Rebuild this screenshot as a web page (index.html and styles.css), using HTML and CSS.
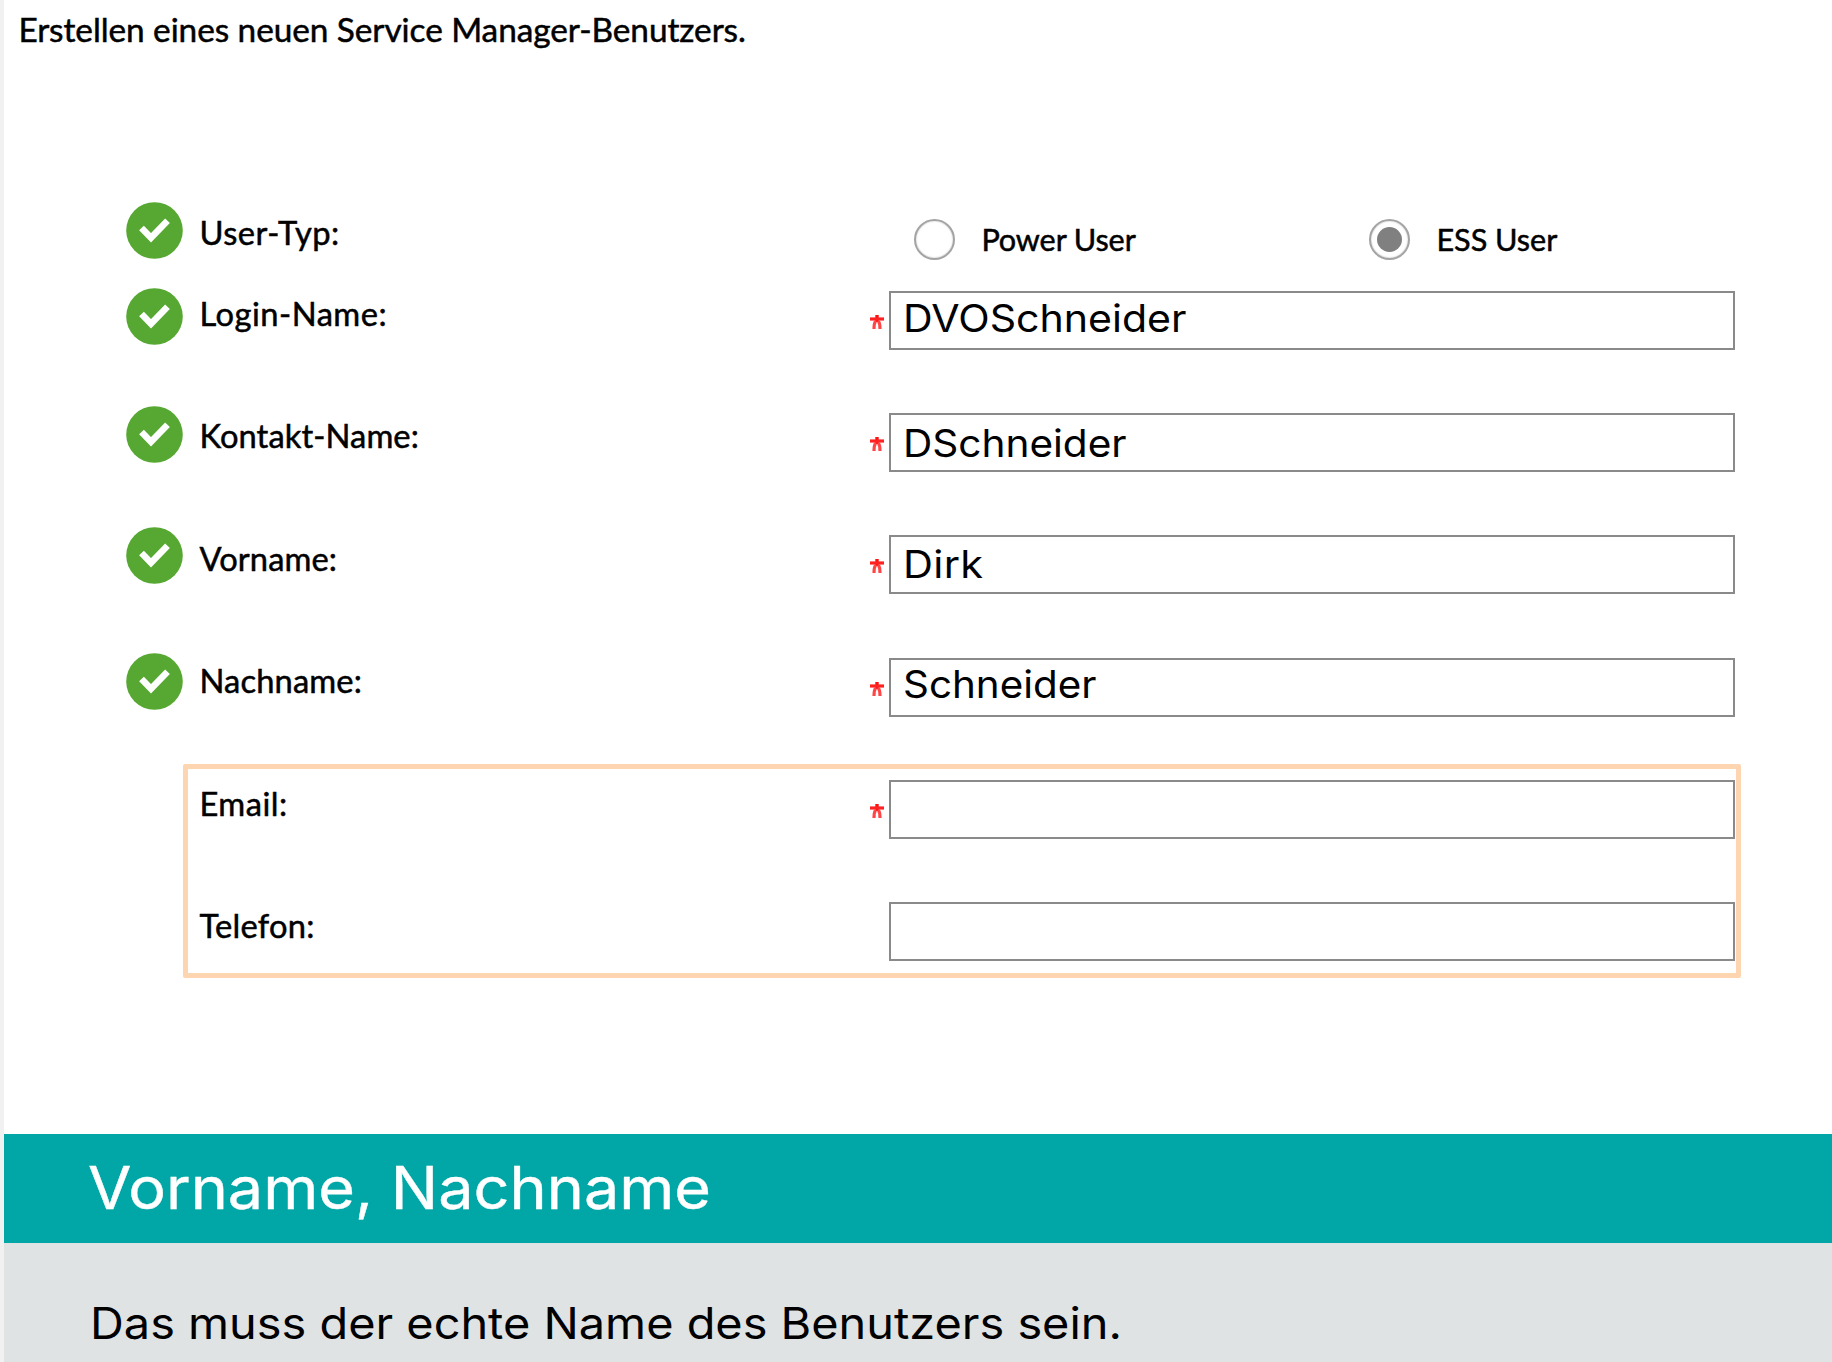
FILE: index.html
```html
<!DOCTYPE html>
<html lang="de">
<head>
<meta charset="utf-8">
<title>Service Manager-Benutzer</title>
<link rel="stylesheet" href="styles.css">
</head>
<body>
<svg class="defs" width="0" height="0" aria-hidden="true">
  <symbol id="check" viewBox="0 0 57 57"><circle cx="28.5" cy="28.5" r="28.3" fill="#56a832"/><path d="M15.500 26 L25 35.800 L41.500 18.800" fill="none" stroke="#fff" stroke-width="6.6"/></symbol>
  <symbol id="star" viewBox="0 0 14 14"><path d="M7 0V7" stroke="#f11" stroke-width="3.4"/><path d="M0 4H14" stroke="#f22" stroke-width="3.2"/><path d="M5.500 6Q4 8.500 4 14M8.500 6Q10 8.500 10 14" fill="none" stroke="#ff4646" stroke-width="3.2"/></symbol>
</svg>
<main class="page">
  <section class="form">
    <p class="intro">Erstellen eines neuen Service Manager-Benutzers.</p>
    <div class="row types">
      <svg class="check"><use href="#check"/></svg>
      <span class="label user-typ">User-Typ:</span>
      <div class="options">
        <label class="option power"><span class="radio"></span>Power User</label>
        <label class="option ess"><span class="radio on"></span>ESS User</label>
      </div>
    </div>
    <div class="row login">
      <svg class="check"><use href="#check"/></svg>
      <span class="label">Login-Name:</span>
      <svg class="star"><use href="#star"/></svg>
      <div class="field"><span class="wide">DVOSchneider</span></div>
    </div>
    <div class="row contact">
      <svg class="check"><use href="#check"/></svg>
      <span class="label">Kontakt-Name:</span>
      <svg class="star"><use href="#star"/></svg>
      <div class="field"><span class="wide">DSchneider</span></div>
    </div>
    <div class="row first">
      <svg class="check"><use href="#check"/></svg>
      <span class="label">Vorname:</span>
      <svg class="star"><use href="#star"/></svg>
      <div class="field"><span class="wide">Dirk</span></div>
    </div>
    <div class="row last">
      <svg class="check"><use href="#check"/></svg>
      <span class="label">Nachname:</span>
      <svg class="star"><use href="#star"/></svg>
      <div class="field"><span class="wide">Schneider</span></div>
    </div>
    <div class="highlight">
      <div class="row email">
        <span class="label">Email:</span>
        <svg class="star"><use href="#star"/></svg>
        <div class="field"></div>
      </div>
      <div class="row phone">
        <span class="label">Telefon:</span>
        <span></span>
        <div class="field"></div>
      </div>
    </div>
  </section>
  <h1 class="banner"><span class="wide">Vorname, Nachname</span></h1>
  <p class="note"><span class="wide">Das muss der echte Name des Benutzers sein.</span></p>
</main>
</body>
</html>
```
FILE: styles.css
```css
* { box-sizing: border-box; }
body { margin: 0; background: #fff; color: #000; overflow: hidden; }
.defs { display: block; height: 0; }
.page { display: flex; flex-direction: column; height: 1362px; border-left: 4px solid #f1f1f1; }
.form { height: 1134px; font-family: Lato, "Noto Sans", sans-serif; white-space: nowrap; -webkit-text-stroke: .5px #000; }
.intro { margin: 0; height: 201px; padding: 9px 0 0 14.4px; font-size: 33.4px; line-height: 40px; letter-spacing: -.07px; }

.row { display: grid; grid-template-columns: 73.400px 670px 20px 846px; height: 122.2px; margin-left: 122px; align-items: start; }
.label { font-size: 32.7px; line-height: 40px; margin-top: 3.300px; }
.check { width: 57px; height: 57px; }
.star { width: 14px; height: 14px; margin: 24px 0 0 .5px; }
.field { height: 59px; border: 2px solid #8a8a8a; padding-left: 12px; font: 38.1px/46px Inter, "Noto Sans", sans-serif; -webkit-text-stroke: 0; }
.wide { display: inline-block; transform-origin: 0 50%; white-space: nowrap; }

.types { height: 90px; grid-template-columns: 73.400px 715px 1fr; }
.types .label { margin-top: 11.600px; letter-spacing: .5px; }
.types .check { margin-top: .5px; }
.options { display: flex; padding-top: 17px; }
.option { display: flex; align-items: center; gap: 26px; width: 455px; height: 43px; font-size: 30.6px; line-height: 37px; }
.power { letter-spacing: -.1px; }
.radio { display: flex; align-items: center; justify-content: center; width: 41px; height: 41px; border: 2px solid #a4a4a4; border-radius: 50%; box-shadow: inset 0 0 1.500px #aaa; }
.radio.on::after { content: ""; width: 25px; height: 25px; border-radius: 50%; background: #808080; }

.login .label { letter-spacing: .5px; }
.login .check { margin-top: -3px; }
.login .field { padding-top: 2px; }
.login .wide { transform: scaleX(1.079); }
.contact .label { letter-spacing: .09px; }
.contact .check { margin-top: -7px; }
.contact .field { padding-top: 5px; }
.contact .wide { transform: scaleX(1.065); }
.first .label { letter-spacing: .1px; }
.first .check { margin-top: -8.600px; }
.first .field { padding-top: 4px; }
.first .wide { transform: scaleX(1.09); letter-spacing: .3px; }
.last .label { letter-spacing: .15px; }
.last .check { margin-top: -4.700px; }
.last .field { padding-top: 1px; }
.last .wide { transform: scaleX(1.060); }

.highlight { width: 1558px; height: 214px; margin: -15.800px 0 0 179px; padding-top: 10.600px; border: 5px solid #fdd5b0; border-radius: 2px; }
.highlight .row { grid-template-columns: 670px 20px 846px; margin-left: 11.400px; }
.highlight .label { margin-top: 4px; }
.email .label { letter-spacing: .5px; }
.phone .label { letter-spacing: .25px; }

.banner { margin: 0; height: 109px; padding: 18px 0 0 84px; background: #01a6a7; color: #fff; font: 400 58.6px/71px Inter, "Noto Sans", sans-serif; -webkit-text-stroke: .4px #fff; }
.banner .wide { transform: scaleX(1.074); }
.note { margin: 0; flex: 1; padding: 54px 0 0 86px; background: #dfe3e3; font: 43.6px/53px Inter, "Noto Sans", sans-serif; }
.note .wide { transform: scaleX(1.075); }
```
